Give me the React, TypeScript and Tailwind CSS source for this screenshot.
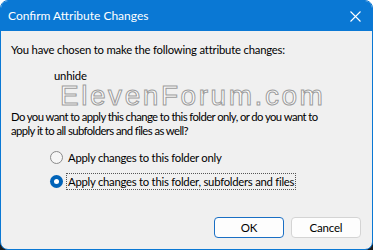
export default function App() {
  const font = { fontFamily: 'Lato, "Liberation Sans", sans-serif' };
  return (
    <div className="w-[373px] h-[250px] bg-[linear-gradient(to_bottom,#ffffff_50%,#1c1c1c_50%)]" style={font}>
      <div className="flex flex-col w-full h-full rounded-[8px] overflow-hidden border border-[#0a78d4] bg-[#f0f0f0]">
        <div className="flex items-center h-[30px] bg-[#0a78d4] text-white shrink-0">
          <span className="pl-[7px] text-[12px] leading-[16px] whitespace-nowrap">Confirm Attribute Changes</span>
          <div className="ml-auto mr-[11px]">
            <svg width="11" height="11" viewBox="0 0 11 11">
              <path d="M0.5 0.5 L10.5 10.5 M10.5 0.5 L0.5 10.5" stroke="white" strokeWidth="1.1" fill="none" />
            </svg>
          </div>
        </div>
        <div className="flex flex-col flex-1 px-[10px] text-[11.3px] tracking-[-0.2px] leading-[15px] text-black whitespace-nowrap">
          <div className="mt-[11px]">You have chosen to make the following attribute changes:</div>
          <div className="mt-[11px] pl-[43px]">unhide</div>
          <div className="mt-0 pl-[49px] text-[28px] leading-[26px] tracking-[2.55px] text-white [-webkit-text-stroke:1px_#9c9c9c]" style={{ fontFamily: '"Liberation Sans", Arial, sans-serif' }}>
            ElevenForum.com
          </div>
          <div className="mt-[1px] leading-[14px] tracking-[-0.58px]">
            Do you want to apply this change to this folder only, or do you want to
            <br />
            apply it to all subfolders and files as well?
          </div>
          <div className="flex flex-col gap-[7px] mt-[11px] pl-[39px] tracking-[-0.25px]">
            <div className="flex items-center gap-[3px]">
              <span className="w-[13px] h-[13px] rounded-full border border-[#8a8a8a] bg-[#f6f6f6] shrink-0" />
              <span className="px-[1px] border border-transparent">Apply changes to this folder only</span>
            </div>
            <div className="flex items-center gap-[3px]">
              <span className="flex items-center justify-center w-[13px] h-[13px] rounded-full bg-[#0063b8] shrink-0">
                <span className="w-[5px] h-[5px] rounded-full bg-white" />
              </span>
              <span className="px-[1px] border border-dotted border-[#555]">Apply changes to this folder, subfolders and files</span>
            </div>
          </div>
          <div className="flex justify-end gap-[7px] mt-auto mb-[11px] mr-[1px]">
            <button className="w-[70px] h-[21px] rounded-[4px] border border-[#1a6fc4] bg-[#fdfdfd] text-[11.5px] leading-[15px]">OK</button>
            <button className="w-[70px] h-[21px] rounded-[4px] border border-[#d4d4d4] bg-[#fdfdfd] text-[11.5px] leading-[15px]">Cancel</button>
          </div>
        </div>
      </div>
    </div>
  );
}
